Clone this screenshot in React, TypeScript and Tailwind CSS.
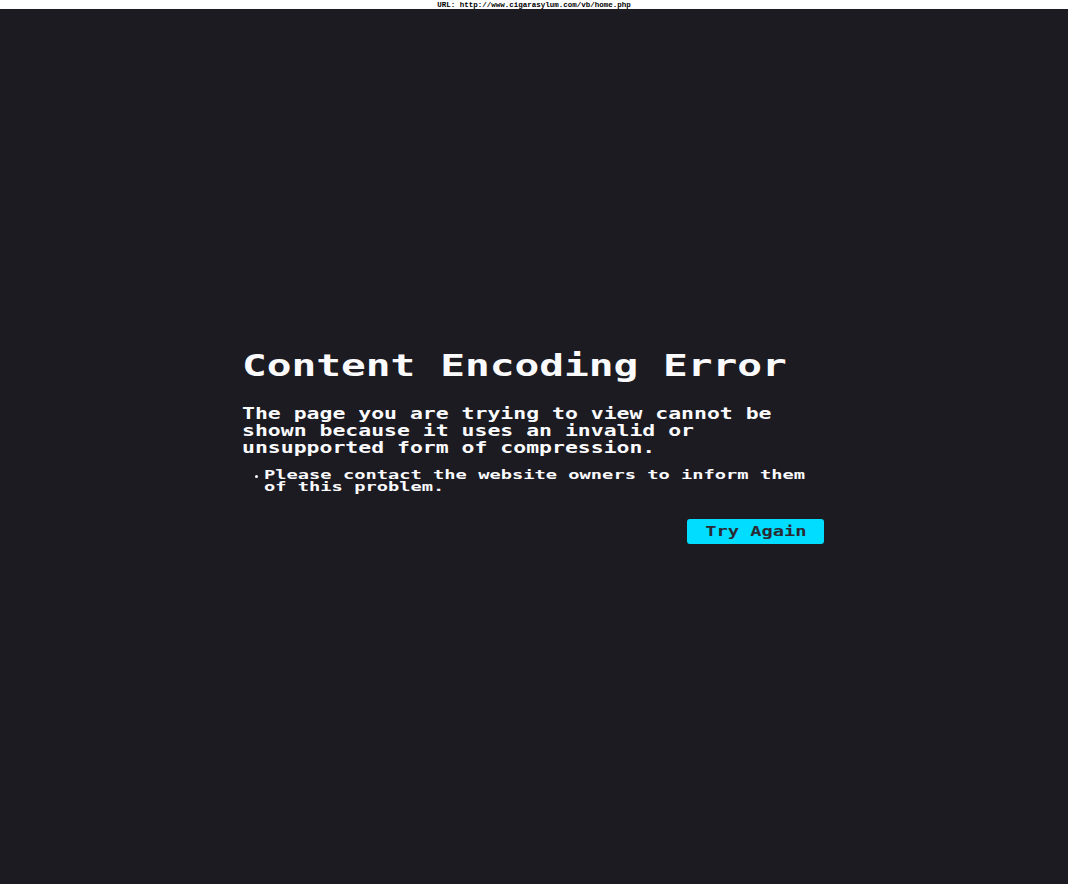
import React from 'react';

function Line({ children, className = '' }: { children: React.ReactNode; className?: string }) {
  return <span className={`block w-max origin-left whitespace-pre ${className}`}>{children}</span>;
}

export default function App() {
  return (
    <div className="flex h-[884px] w-full flex-col overflow-hidden bg-[#1c1b22] font-['DejaVu_Sans_Mono',monospace] font-bold text-[#fbfbfe]">
      <header className="flex h-[9px] shrink-0 items-center justify-center bg-white pt-px font-['Liberation_Mono',monospace] text-[7.5px] leading-[8px] text-black">
        URL: http://www.cigarasylum.com/vb/home.php
      </header>
      <main className="ml-[242px] flex w-[582px] flex-col pt-[336px]">
        <h1 className="text-[31px] leading-[40px]">
          <Line className="scale-x-[1.327]">Content Encoding Error</Line>
        </h1>
        <p className="mt-[21px] text-[15.5px] leading-[17px]">
          <Line className="scale-x-[1.384]">The page you are trying to view cannot be</Line>
          <Line className="scale-x-[1.384]">shown because it uses an invalid or</Line>
          <Line className="scale-x-[1.384]">unsupported form of compression.</Line>
        </p>
        <ul className="mt-3 text-[13px] leading-[12px]">
          <li className="flex">
            <span className="mt-[6px] mr-[6px] ml-[13px] size-[3px] shrink-0 rounded-full bg-[#fbfbfe]" />
            <div>
              <Line className="scale-x-[1.44]">Please contact the website owners to inform them</Line>
              <Line className="scale-x-[1.44]">of this problem.</Line>
            </div>
          </li>
        </ul>
        <button className="mt-[26px] flex h-[25px] w-[137px] items-center justify-center self-end rounded-[3px] bg-[#00ddff] text-[14px] leading-[25px] text-[#2b2a33]">
          <span className="block scale-x-[1.337] whitespace-pre">Try Again</span>
        </button>
      </main>
    </div>
  );
}
